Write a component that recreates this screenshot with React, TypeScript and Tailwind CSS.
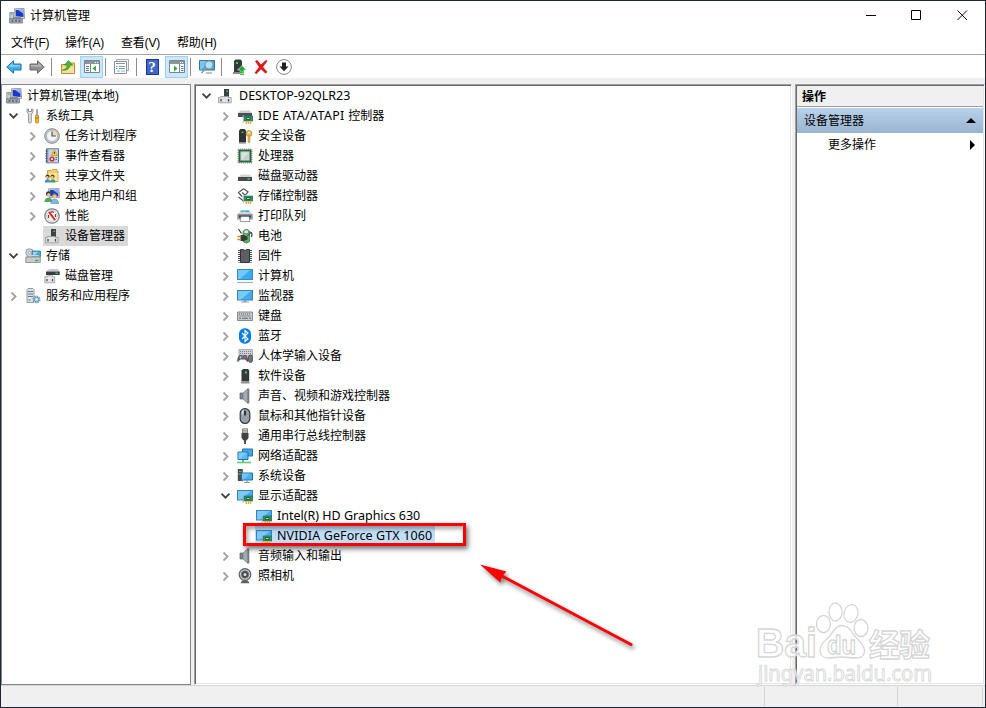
import React from "react";
import clsx from "clsx";

const Svg = ({ children, w = 16, h = 16 }: { children: React.ReactNode; w?: number; h?: number }) => (
  <svg width={w} height={h} viewBox={`0 0 ${w} ${h}`} className="block shrink-0">
    {children}
  </svg>
);

const card = (
  <>
    <path d="M7 8h9v5H7z" fill="#2d9468" stroke="#1b6b48" strokeWidth=".6" />
    <path d="M9.5 9.5H13v2H9.5z" fill="#a4dcc0" stroke="#1a4834" strokeWidth=".8" />
    <path d="M8.500 13.200h1.500V16H8.500zM10.800 13.200h1.500V16h-1.500zM13 13.200h1.200V16H13z" fill="#f5ae24" />
    <path d="M6.200 7v8" stroke="#a9aeb2" strokeWidth=".9" />
  </>
);

const screen = (
  <>
    <rect x=".5" y="2.500" width="15" height="9.500" fill="#41adf0" stroke="#3c82b0" />
    <path d="M1 3h13L4 11.500H1z" fill="#92d5fa" opacity=".7" />
  </>
);

const icons: Record<string, React.ReactNode> = {
  computerMgmt: (
    <>
      <path d="M5.500.8 15 .4l.6 10.200-9.400-.8z" fill="#d8dbe0" stroke="#858b94" strokeWidth=".8" />
      <path d="m6.600 2 7.600-.3.3 7.200-7.600-.6z" fill="#1839c8" />
      <path d="m9 1.900 5.200-.2.200 4z" fill="#8fb4f6" />
      <path d="M.8 4.500h4V11h-4z" fill="#c9cdd2" stroke="#7a818a" strokeWidth=".8" />
      <path d="M2 6h1.600" stroke="#36b24a" strokeWidth="1.200" />
      <path d="M.6 11h12.800v4H.6z" fill="#aeb5bb" stroke="#68717a" strokeWidth=".8" />
      <path d="M2.500 13h2M6 13h2M9.500 13h2" stroke="#4b545d" strokeWidth="1.400" />
      <path d="M4 10h8" stroke="#555e68" />
    </>
  ),
  tools: (
    <>
      <path d="M2 1.200v3.200l1.600 1.300v8.200c0 1.500 2.700 1.500 2.700 0V5.700L8 4.400V1.200L6.500 1v2.500h-3V1z" fill="#e2e5e8" stroke="#767c82" strokeWidth=".8" />
      <path d="M11.500 1.500h1v6h-1z" fill="#d5d5d5" stroke="#85888c" strokeWidth=".7" />
      <path d="M10.500 7.500h3v7q-1.500 1.500-3 0z" fill="#f6b81e" stroke="#b37b0a" strokeWidth=".7" />
      <path d="M10.500 10h3" stroke="#8a5e06" strokeWidth=".8" />
    </>
  ),
  clock: (
    <>
      <circle cx="8" cy="8" r="7.300" fill="#c9ced3" stroke="#7f858b" />
      <circle cx="8" cy="8" r="5.500" fill="#f1f5f9" stroke="#9da6ae" strokeWidth=".7" />
      <path d="M8 8V2.500A5.500 5.500 0 0 1 13.500 8z" fill="#f7dca4" />
      <path d="M8 3.500V8h4" fill="none" stroke="#46566c" strokeWidth="1.200" />
    </>
  ),
  events: (
    <>
      <path d="M2.500.8h12v14h-12z" fill="#8fa8c6" stroke="#5c7390" />
      <path d="M4.500 1.400h9.500v13H4.500z" fill="#c6d5e7" />
      <path d="M1.500 3h2M1.500 5.500h2M1.500 8h2M1.500 10.500h2M1.500 13h2" stroke="#3d4b5d" strokeWidth=".9" />
      <path d="m10.400 2 3.100 5.500H7.300z" fill="#ffd83d" stroke="#ac8400" strokeWidth=".6" />
      <path d="M10.400 4v2" stroke="#222" strokeWidth=".9" />
      <circle cx="8" cy="11" r="2.600" fill="#d9302e" />
      <path d="m7 10 2 2m0-2-2 2" stroke="#fff" strokeWidth=".8" />
      <path d="M11.500 9.500H13M11.500 11.500H13" stroke="#456" strokeWidth=".8" />
    </>
  ),
  shared: (
    <>
      <path d="M3.500 2.500h4l1-1h4.500v2h1v10h-10.500z" fill="#f4cf6e" stroke="#c4942c" strokeWidth=".8" />
      <path d="M4.500 5h9v8h-9z" fill="#fbe29c" />
      <circle cx="3.500" cy="8.500" r="2" fill="#4b392a" />
      <path d="M.7 14.500c0-4.500 5.600-4.500 5.600 0z" fill="#398fcc" />
      <circle cx="8.500" cy="8.500" r="2" fill="#664630" />
      <circle cx="8.200" cy="9.200" r="1.200" fill="#f2c79a" />
      <circle cx="3.300" cy="9.200" r="1.200" fill="#f2c79a" />
      <path d="M6 14.500c0-4.500 5.600-4.500 5.600 0z" fill="#35a46c" />
    </>
  ),
  users: (
    <>
      <path d="m4.500.8 10.500-.2.400 9-10-.3z" fill="#cfd4da" stroke="#7d858e" strokeWidth=".7" />
      <path d="m6 2 8-.2.300 6.500L6.500 8z" fill="#193fc9" />
      <path d="m9 2 5-.2.200 4z" fill="#8bb2f5" />
      <circle cx="4.500" cy="5.800" r="2.500" fill="#473226" />
      <circle cx="4.700" cy="6.800" r="1.700" fill="#efbd91" />
      <path d="M.5 14c0-6 8-6 8 0z" fill="#54a85d" />
      <circle cx="10.500" cy="7.800" r="2.400" fill="#b48747" />
      <circle cx="10.600" cy="8.600" r="1.600" fill="#f7cba2" />
      <path d="M6.700 15.500c0-6 8-6 8 0z" fill="#86b4e0" stroke="#4c81b3" strokeWidth=".5" />
    </>
  ),
  perf: (
    <>
      <circle cx="8" cy="8" r="7.200" fill="#fff" stroke="#767b80" strokeWidth="1.200" />
      <circle cx="8" cy="8" r="5.400" fill="#fdf7f7" stroke="#abb0b5" strokeWidth=".7" />
      <path d="m5 4 6 8" stroke="#d02626" strokeWidth="2" />
      <path d="M4.500 10V7M11.500 9V6M6.500 4.200 8 3.700l2 .8" fill="none" stroke="#9e2a2a" strokeWidth="1.200" />
    </>
  ),
  device: (
    <>
      <path d="M7 1h5v9H7z" fill="#3d4144" />
      <path d="M9.500 2.500H11V4H9.500z" fill="#35d24b" />
      <path d="M3.500 8.500h8v1h2.700v5.300H1.500V9.500h2z" fill="#e0e1e2" stroke="#95999c" strokeWidth=".8" />
      <path d="M4 11v2.500M11.500 11v2.500" stroke="#44484b" strokeWidth="1.300" />
    </>
  ),
  storage: (
    <>
      <circle cx="4.500" cy="4.500" r="3.800" fill="#d0d8dc" stroke="#838d92" strokeWidth=".8" />
      <circle cx="4.500" cy="4.500" r="1.200" fill="#fff" stroke="#838d92" strokeWidth=".6" />
      <path d="M7 3h8.500v5.500H7z" fill="#39ace2" stroke="#34749c" strokeWidth=".8" />
      <path d="M8 4h5L9 8H8z" fill="#96dbf8" />
      <path d="m2 8.500 1-1.500h10l2 1.500z" fill="#e8eaeb" stroke="#92999d" strokeWidth=".5" />
      <path d="M.8 9h14.500v5.500H.8z" fill="#c9ccce" stroke="#7e8487" strokeWidth=".8" />
      <path d="M10 12.500h3.500" stroke="#23b83b" strokeWidth="1.300" />
    </>
  ),
  diskMgmt: (
    <>
      <path d="M2.500 3.500 5 1h9l1.500 2.500z" fill="#c6c9cb" />
      <path d="M2 3.500h13.700V7H2z" fill="#3a3d40" />
      <path d="M11.500 5.200h2.500" stroke="#33d34a" strokeWidth="1.200" />
      <path d="M3.500 7.800h5v1h2.200v6H.8v-6h2.700z" fill="#e4e5e6" stroke="#95999c" strokeWidth=".8" />
      <path d="M3 11v2.200M8.500 11v2.200" stroke="#44484b" strokeWidth="1.200" />
    </>
  ),
  services: (
    <>
      <path d="M2 1.500 3 .5h5l1 1v13H2z" fill="#dbe2e7" stroke="#78858e" strokeWidth=".8" />
      <path d="M3 3.500h5M3 6h5M3 8.500h5" stroke="#6b7b86" />
      <path d="M3.500 12h2" stroke="#2eae42" strokeWidth="1.200" />
      <circle cx="11.500" cy="11.500" r="3" fill="#e9f2f9" stroke="#6f9fc3" strokeWidth="2" strokeDasharray="1.500 .8" />
      <circle cx="11.500" cy="11.500" r="2.300" fill="#b4d2e8" stroke="#5989ad" strokeWidth=".8" />
      <circle cx="11.500" cy="11.500" r=".9" fill="#fff" />
    </>
  ),
  ide: (
    <>
      <path d="M1 5 3.500 2.500h9L15 5z" fill="#cccfd1" />
      <path d="M1 5h14v4H1z" fill="#4b4f52" />
      {card}
    </>
  ),
  security: (
    <>
      <path d="M2 2.500 3.500 1h4L9 2.500v12H2z" fill="#2f3234" />
      <path d="M4.500 3.500h2V5h-2z" fill="#33d34a" />
      <path d="M2 15h7" stroke="#8e9295" strokeWidth="1.300" />
      <circle cx="12" cy="5.500" r="2.900" fill="#e7b65a" stroke="#b88a36" strokeWidth=".8" />
      <circle cx="12" cy="4.500" r=".9" fill="#fff" />
      <path d="M11 8h2v5.500L12 15l-1-1.500z" fill="#e7b65a" stroke="#b88a36" strokeWidth=".6" />
    </>
  ),
  cpu: (
    <>
      <rect x="1" y="1" width="14" height="14" fill="none" stroke="#c4b878" strokeDasharray="1 1" strokeWidth="1.500" />
      <rect x="2" y="2" width="12" height="12" fill="#35775a" stroke="#1d5a3e" />
      <rect x="4" y="4" width="8" height="8" fill="#dce3de" stroke="#cbd3ce" />
      <path d="m5 11.500 6.500-6.500v6.500z" fill="#c6d0ca" />
    </>
  ),
  disk: (
    <>
      <path d="M1.500 9 4 6.500h8.500L15 9z" fill="#d5d7d8" />
      <path d="M1 9h14v4H1z" fill="#484b4d" />
      <path d="M10.500 11H13" stroke="#37dc50" strokeWidth="1.300" />
    </>
  ),
  storageCtl: (
    <>
      <path d="M6.500.8 1.500 4.500l3.500 4M6.500.8l4.500 3-2.500 3M5 4.500l3 2.500" fill="none" stroke="#4e5356" strokeWidth="1.200" />
      <path d="m1.500 9 5 4" stroke="#4e5356" strokeWidth="1.200" />
      {card}
    </>
  ),
  printer: (
    <>
      <path d="M3.500 5V2.500h9V5z" fill="#2aa5e9" />
      <path d="M5.500 2.500h3V5h-3z" fill="#64cfc0" />
      <path d="M.3 6 2.500 4h11l2.200 2z" fill="#d3d6d8" />
      <path d="M.3 6h15.400v5.500H.3z" fill="#8d9296" />
      <path d="M2 7.500h12v2H2z" fill="#3d4144" />
      <path d="M4 8.500h8l1 5H3z" fill="#fff" stroke="#6e7376" strokeWidth=".7" />
    </>
  ),
  battery: (
    <>
      <path d="M6 3.500Q9-.5 12.500 3v10.500q-3 3-6.500 0z" fill="#4fbb50" stroke="#40644a" strokeWidth=".7" />
      <path d="M7 2.500q2.500-1.500 4.500 0v3H7z" fill="#d7e5d9" stroke="#6a756b" strokeWidth=".6" />
      <path d="M12.500 4q3.500 0 2 5M1.500 1l3 4.500" fill="none" stroke="#34383a" strokeWidth="1.200" />
      <path d="M3.500 7h3.500l3.500 2v2.500L7 13H3.500z" fill="#35393b" />
      <path d="M.3 8.500h3.500M.3 11.500h3.500" stroke="#c8952b" strokeWidth="1.300" />
      <path d="m10 8.500 4-4" stroke="#34383a" />
    </>
  ),
  firmware: (
    <>
      <path d="M3.500 1.500h2.500q2 2 4 0h2.500v13h-9z" fill="#5d6063" stroke="#303335" />
      <path d="M2 2v12.500M14 2v12.500" stroke="#303335" strokeWidth="1.800" strokeDasharray="1 1" />
    </>
  ),
  computer: (
    <>
      <rect x=".5" y="1.500" width="15" height="10" fill="#36acf3" stroke="#3c8abb" />
      <path d="M1 2h12L3 11H1z" fill="#8dd3fb" opacity=".7" />
      <path d="M0 14.500h16" stroke="#9cb3c5" strokeWidth="1.200" />
    </>
  ),
  monitor: (
    <>
      {screen}
      <path d="M6.500 12h3v1.500H12v1H4v-1h2.500z" fill="#8aa5b8" />
    </>
  ),
  keyboard: (
    <>
      <path d="M.5 4h15v8.500H.5z" fill="#c4c9cd" stroke="#868c91" />
      <path d="M2 6h12M2.500 8h11" stroke="#555b60" strokeDasharray="1 1" />
      <path d="M2 10.300h2M5 10.300h6M12 10.300h2" stroke="#666c71" />
    </>
  ),
  bluetooth: (
    <>
      <rect x="2" y=".3" width="12" height="15.400" rx="5.500" fill="#087de8" />
      <path d="m5 5 6 6-3 2.500v-11L11 5l-6 6" fill="none" stroke="#fff" strokeWidth="1.100" />
    </>
  ),
  hid: (
    <>
      <path d="M2 1.500h13.500V8H2z" fill="#ced2d5" stroke="#92979c" strokeWidth=".7" />
      <path d="M3 3.500h11M3 5.500h11" stroke="#7b8187" strokeDasharray="1 1" />
      <path d="M2.500 7h6.500c2 1 2.800 7 1.600 7-1.200 0-1.500-2.500-2.600-2.500H3.500C2.400 11.500 2 14 .8 14-.4 14 .5 8 2.500 7z" fill="#555b61" />
      <path d="M3.500 8v2.500M2.300 9.200h2.500" stroke="#ccd" strokeWidth=".8" />
      <circle cx="8" cy="9.200" r="1.200" fill="#e8483b" />
      <path d="M5 7h1.500v2.500H5z" fill="#27a3e8" />
      <rect x="11.500" y="7" width="4" height="7.500" rx="2" fill="#71777c" stroke="#33383c" strokeWidth=".7" />
    </>
  ),
  software: (
    <>
      <path d="M4.500 2.500 6 1h5l1.200 1.500v11H4.500z" fill="#35393b" />
      <path d="M8 3.500h2v2H8z" fill="#32df48" />
      <path d="M4 14h8.500v1.500H4z" fill="#8c9092" />
    </>
  ),
  speaker: (
    <>
      <path d="M3 5h3v6H3z" fill="#7c858c" stroke="#5f666c" strokeWidth=".7" />
      <path d="M6 5 10.500.8v14.400L6 11z" fill="#a3acb3" stroke="#7a8289" strokeWidth=".7" />
      <path d="M10.500.5h1.800v15h-1.800z" fill="#747c83" />
    </>
  ),
  mouse: (
    <>
      <rect x="3.200" y=".7" width="9.600" height="14.600" rx="4.600" fill="#96a1ab" stroke="#343a40" strokeWidth="1.200" />
      <path d="M4.800 4q0-2.300 2-2.500v5h-2z" fill="#d2dae0" />
      <rect x="6.900" y="2.500" width="2.200" height="5" rx="1" fill="#30353a" />
    </>
  ),
  usb: (
    <>
      <path d="M5.500.8h5V5h-5z" fill="#d8dadb" stroke="#65696c" strokeWidth=".8" />
      <path d="M7 2.200v1.300M9 2.200v1.300" stroke="#45494c" />
      <path d="M4.500 5h7v5L9.500 12.500h-3L4.500 10z" fill="#3f4346" />
      <path d="M8 12v4" stroke="#3f4346" strokeWidth="1.800" />
    </>
  ),
  network: (
    <>
      <path d="M5.500 1h10v7h-10z" fill="#3fa9ea" stroke="#2473a9" />
      <path d="M1 4h10v7.500H1z" fill="#55bdf6" stroke="#2473a9" />
      <path d="M1.500 4.500h8l-6 6.500h-2z" fill="#93d8fb" opacity=".6" />
      <path d="M5 12h2v2H5z" fill="#859ba9" />
      <path d="M0 14.500h14" stroke="#67c77a" strokeWidth="1.600" />
    </>
  ),
  system: (
    <>
      <path d="M.8 1h5v12h-5z" fill="#474d52" />
      <path d="M2 3.500h2.500" stroke="#33d34a" />
      <path d="M1.500 6h3" stroke="#9da5aa" />
      <path d="M4.500 5h11v7h-11z" fill="#47b2f2" stroke="#286e9d" />
      <path d="M5 5.500h8L7 11.500H5z" fill="#8fd4fb" opacity=".6" />
      <path d="M7 14.500h6M10 12v2.500" stroke="#859ba9" strokeWidth="1.200" />
    </>
  ),
  display: (
    <>
      {screen}
      {card}
    </>
  ),
  camera: (
    <>
      <circle cx="8" cy="6.500" r="5.800" fill="#c9cccf" stroke="#5b6065" strokeWidth="1.200" />
      <circle cx="8" cy="6.500" r="3.700" fill="#43484c" stroke="#787e83" strokeWidth=".8" />
      <circle cx="8" cy="6.500" r="1.500" fill="#d8dee2" />
      <path d="M5 12.500h6l1.500 2.700h-9z" fill="#5b6065" />
    </>
  ),
};

const Icon = ({ name }: { name: string }) => <Svg>{icons[name]}</Svg>;

const Chevron = ({ open }: { open?: boolean }) => (
  <Svg>
    {open ? (
      <path d="M3.500 5.700 7.500 9.700l4-4" fill="none" stroke="#404040" strokeWidth="1.800" />
    ) : (
      <path d="m5.500 4.500 4 4-4 4" fill="none" stroke="#a3a3a3" strokeWidth="1.800" />
    )}
  </Svg>
);

type Node = {
  icon: string;
  label: string;
  prefix?: string;
  open?: boolean;
  leaf?: boolean;
  depth?: number;
  selected?: boolean;
};

const consoleTree: Node[] = [
  { icon: "tools", label: "系统工具", open: true },
  { icon: "clock", label: "任务计划程序", depth: 1 },
  { icon: "events", label: "事件查看器", depth: 1 },
  { icon: "shared", label: "共享文件夹", depth: 1 },
  { icon: "users", label: "本地用户和组", depth: 1 },
  { icon: "perf", label: "性能", depth: 1 },
  { icon: "device", label: "设备管理器", depth: 1, leaf: true, selected: true },
  { icon: "storage", label: "存储", open: true },
  { icon: "diskMgmt", label: "磁盘管理", depth: 1, leaf: true },
  { icon: "services", label: "服务和应用程序" },
];

const devices: Node[] = [
  { icon: "ide", prefix: "IDE ATA/ATAPI ", label: "控制器" },
  { icon: "security", label: "安全设备" },
  { icon: "cpu", label: "处理器" },
  { icon: "disk", label: "磁盘驱动器" },
  { icon: "storageCtl", label: "存储控制器" },
  { icon: "printer", label: "打印队列" },
  { icon: "battery", label: "电池" },
  { icon: "firmware", label: "固件" },
  { icon: "computer", label: "计算机" },
  { icon: "monitor", label: "监视器" },
  { icon: "keyboard", label: "键盘" },
  { icon: "bluetooth", label: "蓝牙" },
  { icon: "hid", label: "人体学输入设备" },
  { icon: "software", label: "软件设备" },
  { icon: "speaker", label: "声音、视频和游戏控制器" },
  { icon: "mouse", label: "鼠标和其他指针设备" },
  { icon: "usb", label: "通用串行总线控制器" },
  { icon: "network", label: "网络适配器" },
  { icon: "system", label: "系统设备" },
  { icon: "display", label: "显示适配器", open: true },
  { icon: "display", prefix: "Intel(R) HD Graphics 630", label: "", depth: 1, leaf: true },
  { icon: "display", prefix: "NVIDIA GeForce GTX 1060", label: "", depth: 1, leaf: true, selected: true },
  { icon: "speaker", label: "音频输入和输出" },
  { icon: "camera", label: "照相机" },
];

const Row = ({ node, highlight }: { node: Node; highlight: string }) => (
  <div className={clsx("flex h-5 items-center", node.depth ? "pl-[19px]" : "pl-0")}>
    <div className="w-[18px] shrink-0">{!node.leaf && <Chevron open={node.open} />}</div>
    <div className={clsx("flex h-5 items-center gap-[5px] pr-[3px] pl-px", node.selected && highlight)}>
      <Icon name={node.icon} />
      <span className="whitespace-pre">
        {node.prefix && (
          <span
            className={clsx(
              "text-[12.5px]",
              node.label && "tracking-[0.33px]",
              node.selected && "tracking-[0.12px]"
            )}
          >
            {node.prefix}
          </span>
        )}
        {node.label}
      </span>
    </div>
  </div>
);

const Sep = () => <div className="h-[18px] w-px bg-[#8d8d8d]" />;

const PaneIcon = ({ right }: { right?: boolean }) => (
  <>
    <path d="M.5 1.500h15v12H.5z" fill="#fff" stroke="#7b858e" />
    <path d="M1 2h14v3H1z" fill="#8a959e" />
    <path d="M11 3.500h1M13 3.500h1" stroke="#fff" />
    <path d={right ? "M10.500 5v8" : "M6.500 5v8"} stroke="#7b858e" />
    {right ? (
      <>
        <path d="M12 7.500h2.500M12 9.500h2.500M12 11.500h2.500" stroke="#4582b4" />
        <path d="m5 6.500 3.500 3L5 12.500z" fill="#3aa83f" />
      </>
    ) : (
      <>
        <path d="M2 7.500h3M2 9.500h3M2 11.500h3" stroke="#4582b4" />
        <path d="m12 6.500-3.500 3 3.500 3z" fill="#3aa83f" />
      </>
    )}
  </>
);

const Toolbar = () => (
  <div className="flex h-[23px] items-center bg-white pt-px pl-[5px]">
    <Svg>
      <path d="M.8 8 7.500 1.800V5H15v6H7.500v3.200z" fill="#3fb0ea" stroke="#1c70ad" />
      <path d="M2.500 7.700 6.500 4v2H14v1.500z" fill="#8bd4f8" />
    </Svg>
    <div className="w-[7px]" />
    <Svg>
      <path d="M15.200 8 8.500 1.800V5H1v6h7.500v3.200z" fill="#929292" stroke="#686868" />
      <path d="M13.500 7.700 9.500 4v2H2v1.500z" fill="#b8b8b8" />
    </Svg>
    <div className="w-[6px]" />
    <Sep />
    <div className="w-[8px]" />
    <Svg>
      <path d="M1.500 5.500h5l1-1.500h7v10.500h-13z" fill="#f2cf79" stroke="#b99338" />
      <path d="M2.500 8h11.500v6H2.500z" fill="#f9e1a0" />
      <path d="M2.500 11c4-1 5-3 4.500-5H4.500L8.500 1.500l4 4.500H10C10 9 7 12 2.500 11z" fill="#45b93d" stroke="#268222" strokeWidth=".6" />
    </Svg>
    <div className="w-[4px]" />
    <div className="flex h-[22px] w-[23px] items-center justify-center border border-[#99d1ff] bg-[#cce8ff]">
      <Svg><PaneIcon /></Svg>
    </div>
    <div className="w-[2px]" />
    <Sep />
    <div className="w-[8px]" />
    <Svg>
      <path d="M2.500.5h12v11h-12z" fill="#eef1f3" stroke="#a4aaae" />
      <path d="M.5 2.500h12v12H.5z" fill="#fff" stroke="#8b9297" />
      <path d="M2 4.500h9" stroke="#8b9297" />
      <path d="M2 7.500h1.500M2 9.500h1.500" stroke="#32a4d4" strokeWidth="1.200" />
      <path d="M5 7.500h6M5 9.500h6" stroke="#8b9297" />
      <path d="M3 12h3M7 12h4" stroke="#9fd4ea" strokeWidth="1.400" />
    </Svg>
    <div className="w-[6px]" />
    <Sep />
    <div className="w-[7px]" />
    <div className="flex h-[16px] w-[16px] items-center justify-center">
      <div className="flex h-[16px] w-[13px] items-center justify-center border border-[#1c3688] bg-[#3f66cb] font-['Liberation_Serif',serif] text-[15px] leading-none font-bold text-white">?</div>
    </div>
    <div className="w-[5px]" />
    <div className="flex h-[22px] w-[23px] items-center justify-center border border-[#99d1ff] bg-[#cce8ff]">
      <Svg><PaneIcon right /></Svg>
    </div>
    <div className="w-[2px]" />
    <Sep />
    <div className="w-[8px]" />
    <Svg>
      <path d="M.5 1.500h15v9.500H.5z" fill="#45abe3" stroke="#39759b" />
      <path d="M1 2h8L3 10.500H1z" fill="#8ed2f6" opacity=".7" />
      <circle cx="10" cy="6" r="4" fill="#b5e1f7" stroke="#7d98a9" strokeWidth="1.200" />
      <path d="m7 9-4.500 5" stroke="#7d98a9" strokeWidth="1.600" />
      <path d="M7 14h6" stroke="#8ba0ad" strokeWidth="1.200" />
    </Svg>
    <div className="w-[6px]" />
    <Sep />
    <div className="w-[9px]" />
    <Svg>
      <path d="M3 2 4.500.5h5L11 2v11.500H3z" fill="#36393b" />
      <path d="M5 3h2v2H5z" fill="#33d34a" />
      <path d="M2 13h7v2H2z" fill="#85898c" />
      <path d="M11 6.500 15.500 11H13v1.500H9V11H6.500z" fill="#1fae35" stroke="#fff" strokeWidth=".5" />
      <path d="M9 13.200h4M9 15.200h4" stroke="#1fae35" strokeWidth="1.200" />
    </Svg>
    <div className="w-[6px]" />
    <Svg>
      <path d="m2 2.200 2-1.200L8 5.500 13 1l1.500 1L10 8l4.500 5-2 1.500L8 10.200 3.500 15 1.500 14 6 8z" fill="#df1717" />
    </Svg>
    <div className="w-[7px]" />
    <Svg>
      <circle cx="8" cy="8" r="7.400" fill="#fff" stroke="#858585" />
      <path d="M6 3.500h4v4h2.500L8 12.300 3.500 7.500H6z" fill="#202020" />
    </Svg>
  </div>
);

// red marker and arrow pointing at the selected adapter
const Annotation = () => (
  <>
    <div className="absolute top-[523px] left-[243px] h-[23px] w-[223px] border-[3px] border-[#fe0000] shadow-[2px_3px_5px_rgba(0,0,0,0.55),inset_2px_3px_4px_rgba(0,0,0,0.35)]" />
    <svg width="180" height="110" className="absolute top-[550px] left-[465px] drop-shadow-[2px_3px_2px_rgba(0,0,0,0.5)]">
      <path d="M36 25.500 166 94.500" stroke="#fe0000" strokeWidth="3" strokeLinecap="round" />
      <path d="m15 14.500 26.500 7-4.300 4.500-2 6.500z" fill="#fe0000" />
    </svg>
  </>
);

const Watermark = () => (
  <svg width="190" height="104" className="absolute top-[596px] left-[748px]">
    <g fill="#fff" fillOpacity=".75" stroke="#d6d6d6" strokeWidth="1.300">
      <text x="8" y="61" fontSize="40" fontWeight="700" textLength="61" lengthAdjust="spacingAndGlyphs" fontFamily="Liberation Sans, sans-serif">Bai</text>
      <ellipse cx="75.500" cy="28" rx="7" ry="8.500" />
      <ellipse cx="87.500" cy="16" rx="6.500" ry="9" />
      <ellipse cx="103" cy="17.500" rx="7" ry="9" transform="rotate(12 103 17.500)" />
      <ellipse cx="113" cy="32" rx="7" ry="8.500" />
      <path d="M93.500 29.500c8 0 10 7.500 15 12.500 4.500 4.500 8 8 8 13 0 5-4 7-9 7-5 0-9-1-14-1s-8 1-13 1-8.500-3-8.500-8c0-5 4-8.500 8.500-12.500 5-5 6.500-12 13-12z" />
      <text x="79" y="58" fontSize="26" fontWeight="700" textLength="29" lengthAdjust="spacingAndGlyphs" fontFamily="Liberation Sans, sans-serif">du</text>
      <text x="121" y="60" fontSize="31" fontWeight="700" textLength="61" fontFamily="Noto Sans CJK SC, sans-serif">经验</text>
      <text x="10" y="85" fontSize="21.500" strokeWidth=".9" textLength="174" lengthAdjust="spacingAndGlyphs" fontFamily="Noto Sans, sans-serif">jingyan.baidu.com</text>
    </g>
  </svg>
);

const sunken =
  "border border-t-[#a0a0a0] border-l-[#a0a0a0] border-r-white border-b-white bg-white pt-px pr-px shadow-[inset_1px_1px_#696969,inset_-1px_-1px_#e3e3e3]";

export default function App() {
  return (
    <div className="relative flex h-[708px] w-[986px] flex-col overflow-hidden border border-[#1c2836] bg-white font-['Liberation_Sans','Noto_Sans_CJK_SC',sans-serif] text-[12px] leading-[20px] whitespace-nowrap text-black">
      <div className="flex h-[29px] shrink-0 items-center pl-2">
        <Icon name="computerMgmt" />
        <span className="pl-[5px]">计算机管理</span>
        <svg width="106" height="12" className="mr-[14px] mb-[2px] ml-auto" fill="none" stroke="#000">
          <path d="M1 6.500h10M46.500 1.500h9v9h-9zM92.500 1.500l9.500 9.500m0-9.500L92.500 11" />
        </svg>
      </div>
      <div className="flex h-[24px] shrink-0 items-center pt-[2px] pl-[10px] tracking-[-0.2px]">
        <span className="w-[54px]">文件(F)</span>
        <span className="w-[56px]">操作(A)</span>
        <span className="w-[56px]">查看(V)</span>
        <span>帮助(H)</span>
      </div>
      <div className="shrink-0 border-t border-[#a5a5a5]">
        <Toolbar />
      </div>

      <div className="flex h-[607px] shrink-0 gap-[3px] bg-[#f0f0f0] pt-[6px]">
        <div className="w-[190px] shrink-0 border border-[#828790] bg-white pt-px pl-1">
          <div className="flex h-5 items-center gap-[5px]">
            <Icon name="computerMgmt" />
            <span>计算机管理(本地)</span>
          </div>
          {consoleTree.map((n) => (
            <Row key={n.label} node={n} highlight="bg-[#d9d9d9]" />
          ))}
        </div>

        <div className={clsx("w-[598px] shrink-0 pl-[4px] font-['Noto_Sans','Noto_Sans_CJK_SC',sans-serif]", sunken)}>
          <div className="flex h-5 items-center">
            <Chevron open />
            <div className="w-[2px]" />
            <Icon name="device" />
            <span className="pl-[6px] text-[12.5px]">DESKTOP-92QLR23</span>
          </div>
          <div className="pl-[19px]">
            {devices.map((n) => (
              <Row key={(n.prefix ?? "") + n.label} node={n} highlight="bg-[#c3dff7]" />
            ))}
          </div>
        </div>

        <div className={clsx("w-[190px] shrink-0 pl-px", sunken)}>
          <div className="h-[21px] border-b border-[#a0a0a0] bg-[#f0f0f0] pt-px pl-[5px] font-bold">操作</div>
          <div className="mt-px flex h-[25px] items-center justify-between bg-linear-to-b from-[#b9d1ea] to-[#99b4d1] pr-[7px] pl-[7px]">
            <span>设备管理器</span>
            <Svg w={10} h={5}><path d="M5 0l5 5H0z" /></Svg>
          </div>
          <div className="flex h-[24px] items-center justify-between pr-[8px] pl-[31px]">
            <span>更多操作</span>
            <Svg w={5} h={10}><path d="M0 0l5 5-5 5z" /></Svg>
          </div>
        </div>
      </div>

      <div className="flex flex-1 justify-end border-t border-[#d5d5d5] bg-[#f0f0f0] pt-px pr-[2px] pb-px">
        <div className="w-[133px] border-l border-[#d5d5d5]" />
        <div className="w-[86px] border-x border-[#d5d5d5]" />
      </div>

      <div className="absolute -top-px -left-px">
        <Annotation />
        <Watermark />
      </div>
    </div>
  );
}
